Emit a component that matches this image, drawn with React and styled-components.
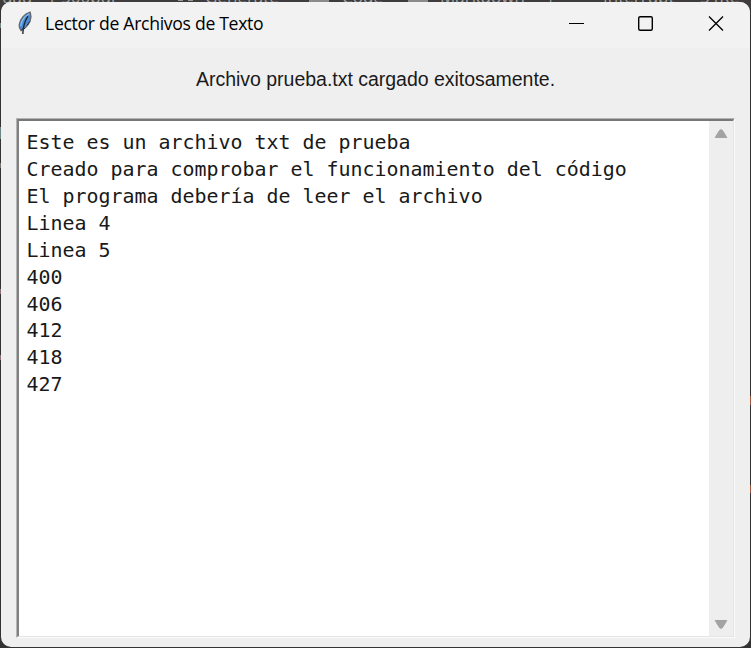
import React from "react";
import styled, { createGlobalStyle } from "styled-components";

const GlobalStyle = createGlobalStyle`
  * { box-sizing: border-box; }
  body { margin: 0; overflow: hidden; background: #343233; }
`;

const Desktop = styled.div`
  position: relative;
  width: 751px;
  height: 648px;
  padding: 2px 1px 1px;
  background: #343233;
  overflow: hidden;
`;

const BackdropBar = styled.div`
  position: absolute;
  inset: 0 0 auto 0;
  height: 8px;
  overflow: hidden;
  background: #3e3c3c;
`;

const BackdropLabel = styled.span`
  position: absolute;
  left: ${(p) => p.$x}px;
  top: -13px;
  font: 17px/20px "Open Sans", sans-serif;
  color: #a5a5a5;
  white-space: pre;
`;

const BackdropMark = styled.i`
  position: absolute;
  left: ${(p) => p.$x}px;
  top: ${(p) => p.$y}px;
  width: ${(p) => p.$w}px;
  height: ${(p) => p.$h}px;
  background: ${(p) => p.$color};
`;

const Window = styled.main`
  position: relative;
  display: flex;
  flex-direction: column;
  width: 749px;
  height: 645px;
  border-radius: 10px;
  background: #efefef;
  overflow: hidden;
`;

const TitleBar = styled.header`
  display: flex;
  align-items: center;
  flex: 0 0 46px;
  height: 46px;
  padding: 0 0 3px 15px;
  background: #f2f2f2;
`;

const Feather = styled.svg`
  width: 18px;
  height: 25px;
  margin-right: 11px;
`;

const Title = styled.h1`
  flex: 1;
  margin: 0;
  padding-bottom: 1px;
  font: 400 17.6px/24px "Open Sans", sans-serif;
  letter-spacing: -0.3px;
  color: #000;
  white-space: nowrap;
`;

const CaptionButton = styled.button`
  display: flex;
  align-items: center;
  justify-content: center;
  width: ${(p) => p.$width || 70}px;
  height: 43px;
  padding: 0;
  border: 0;
  background: transparent;
`;

const Glyph = styled.svg`
  width: 17px;
  height: 17px;
  fill: none;
  stroke: #000;
`;

const Status = styled.p`
  margin: 19px 0 0;
  height: 51px;
  padding-left: 195px;
  font: 400 19.5px/24px "Liberation Sans", sans-serif;
  letter-spacing: -0.02px;
  color: #1a1a1a;
  white-space: nowrap;
`;

const TextFrame = styled.section`
  display: flex;
  width: 719px;
  height: 520px;
  margin-left: 15px;
  border: 1px solid;
  border-color: #b4b4b4 #fafafa #fafafa #b4b4b4;
  background: #fff;
`;

const TextWell = styled.div`
  display: flex;
  flex: 1;
  border: solid;
  border-width: 2px 1px 1px 2px;
  border-color: #777 #e5e5e5 #e5e5e5 #808080;
`;

const Lines = styled.pre`
  flex: 1;
  margin: 0;
  padding: 8px 0 0 7.5px;
  font: 400 19.94px/26.92px "DejaVu Sans Mono", monospace;
  color: #191919;
`;

const Scrollbar = styled.div`
  display: flex;
  flex-direction: column;
  justify-content: space-between;
  align-items: center;
  width: 24px;
  padding: 7px 0 6px;
  background: #eee;
`;

const Arrow = styled.svg`
  width: 14px;
  height: 11px;
  fill: #a3a3a3;
  stroke: #a3a3a3;
  stroke-linejoin: round;
`;

const lines = [
  "Este es un archivo txt de prueba",
  "Creado para comprobar el funcionamiento del código",
  "El programa debería de leer el archivo",
  "Linea 4",
  "Linea 5",
  "400",
  "406",
  "412",
  "418",
  "427",
];

const labels = [
  [2, "uau"], [50, "[-500pu["], [205, "Generate"], [342, "Code"],
  [440, "Markdown"], [546, "|"], [603, "Interrupt"], [700, "5 (Re"],
];

const marks = [
  [309, 0, 20, 2, "#8b8b8b"],
  [408, 0, 20, 2, "#8b8b8b"],
  [178, 0, 5, 1, "#9a9a9a"],
  [188, 0, 5, 1, "#9a9a9a"],
  [0, 23, 1, 5, "#6e8583"],
  [0, 127, 1, 12, "#6e8583"],
  [0, 163, 1, 5, "#78706a"],
  [0, 289, 1, 5, "#887078"],
  [0, 355, 1, 5, "#887078"],
  [750, 396, 1, 9, "#9d543c"],
  [750, 485, 1, 8, "#9d543c"],
];

export default function App() {
  return (
    <>
      <GlobalStyle />
      <Desktop>
        <BackdropBar aria-hidden="true">
          {labels.map(([x, text]) => (
            <BackdropLabel key={x} $x={x}>{text}</BackdropLabel>
          ))}
        </BackdropBar>
        {marks.map(([x, y, w, h, color]) => (
          <BackdropMark key={`${x}-${y}`} $x={x} $y={y} $w={w} $h={h} $color={color} />
        ))}
        <Window>
          <TitleBar>
            <Feather viewBox="0 0 18 25">
              <path d="M14.2 1.2C8.5 2.6 4 8 3.2 13.5c-.2 2 .3 4.2 1.9 6.2 5.6-3.2 9.5-8.7 9.9-14z" fill="#4a8bd8" stroke="#66696c" strokeWidth="1.3" />
              <path d="M13.3 2.8C8.4 5.6 5.2 10.2 4.7 15" fill="none" stroke="#8ebce6" strokeWidth="1.2" />
              <path d="M11.8 5.2C8.8 10.3 7 16 6.8 23" fill="none" stroke="#1e2b35" strokeWidth="1.4" />
              <path d="M11 14.3l3-4M5.4 18.6l3.6-1.2" stroke="#263442" strokeWidth="1" />
            </Feather>
            <Title>Lector de Archivos de Texto</Title>
            <CaptionButton aria-label="Minimizar" $width={69}>
              <Glyph viewBox="0 0 17 17"><path d="M1 8.5h15" strokeWidth="1" /></Glyph>
            </CaptionButton>
            <CaptionButton aria-label="Maximizar" $width={69}>
              <Glyph viewBox="0 0 17 17"><rect x="1.7" y="1.7" width="13.6" height="13.6" rx="1.5" strokeWidth="1.4" /></Glyph>
            </CaptionButton>
            <CaptionButton aria-label="Cerrar" $width={70}>
              <Glyph viewBox="0 0 17 17"><path d="M2 1.5l14 14M16 1.5l-14 14" strokeWidth="1.3" /></Glyph>
            </CaptionButton>
          </TitleBar>
          <Status>Archivo prueba.txt cargado exitosamente.</Status>
          <TextFrame>
            <TextWell>
              <Lines>{lines.join("\n")}</Lines>
              <Scrollbar>
                <Arrow viewBox="0 0 14 11"><path d="M1.2 9.5L5.6 2.3Q7 1 8.4 2.3L12.8 9.5z" /></Arrow>
                <Arrow viewBox="0 0 14 11"><path d="M1.2 1.5L5.6 8.7Q7 10 8.4 8.7L12.8 1.5z" /></Arrow>
              </Scrollbar>
            </TextWell>
          </TextFrame>
        </Window>
      </Desktop>
    </>
  );
}
